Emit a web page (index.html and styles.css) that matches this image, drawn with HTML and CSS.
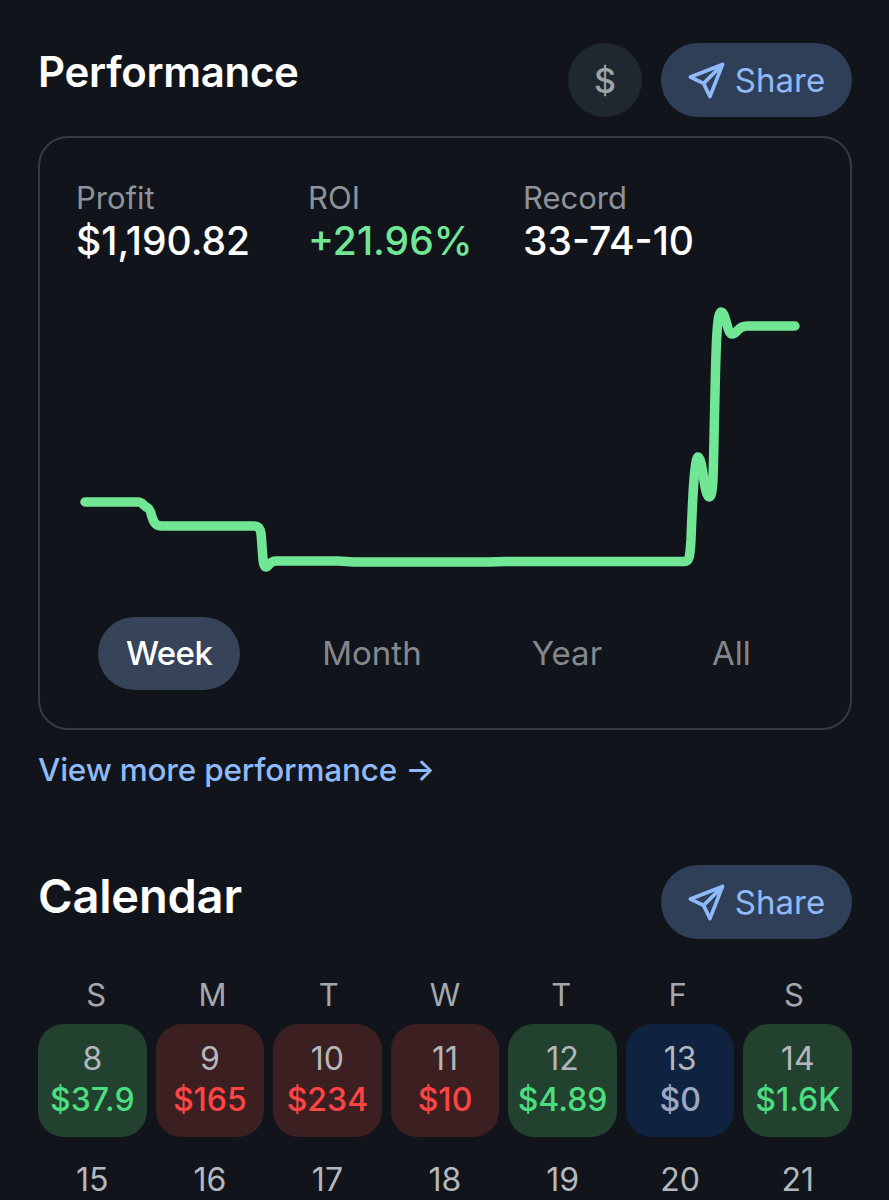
FILE: index.html
```html
<!DOCTYPE html>
<html lang="en">
<head>
    <meta charset="UTF-8">
    <meta name="viewport" content="width=device-width, initial-scale=1.0">
    <title>Performance</title>
    <link rel="stylesheet" href="styles.css">
</head>
<body>
    <div class="page">
        <div class="section-head">
            <h2>Performance</h2>
            <div class="head-actions">
                <button class="round-btn">$</button>
                <button class="share-btn">
                    <svg class="share-icon" viewBox="0 0 38 38"><path d="M2.5 15.5 L35.5 2.5 L22.5 35.5 L16 22 Z M16 22 L35.5 2.5"/></svg>
                    Share
                </button>
            </div>
        </div>

        <div class="perf-card">
            <div class="stats">
                <div>
                    <div class="stat-label">Profit</div>
                    <div class="stat-value">$1,190.82</div>
                </div>
                <div>
                    <div class="stat-label">ROI</div>
                    <div class="stat-value green">+21.96%</div>
                </div>
                <div>
                    <div class="stat-label">Record</div>
                    <div class="stat-value">33-74-10</div>
                </div>
            </div>
            <svg class="chart" viewBox="0 0 811 330">
                <path d="M45 218 H98 C103 218 103 222 108 224 C113 227 110 242 122 242 H214 C222 242 221 250 222 262 C223 275 223 283 226 283 C229 283 229 277 236 277 H298 L314 278 H448 L466 277.5 H644 C650 278 650 270 651 255 C652 230 654 173 658 173 C663 173 664 213 669 213 C674 213 673 190 675 110 C676 60 677 28 681 28 C686 28 687 50 692 50 C698 50 697 42 707 42 H755"/>
            </svg>
            <div class="tabs">
                <div class="tab active">Week</div>
                <div class="tab">Month</div>
                <div class="tab">Year</div>
                <div class="tab">All</div>
            </div>
        </div>

        <a class="more-link" href="#">View more performance →</a>

        <div class="section-head calendar-head">
            <h2>Calendar</h2>
            <div class="head-actions">
                <button class="share-btn">
                    <svg class="share-icon" viewBox="0 0 38 38"><path d="M2.5 15.5 L35.5 2.5 L22.5 35.5 L16 22 Z M16 22 L35.5 2.5"/></svg>
                    Share
                </button>
            </div>
        </div>

        <div class="weekdays">
            <div>S</div>
            <div>M</div>
            <div>T</div>
            <div>W</div>
            <div>T</div>
            <div>F</div>
            <div>S</div>
        </div>

        <div class="calendar">
            <div class="day win"><span>8</span><strong>$37.9</strong></div>
            <div class="day loss"><span>9</span><strong>$165</strong></div>
            <div class="day loss"><span>10</span><strong>$234</strong></div>
            <div class="day loss"><span>11</span><strong>$10</strong></div>
            <div class="day win"><span>12</span><strong>$4.89</strong></div>
            <div class="day even"><span>13</span><strong>$0</strong></div>
            <div class="day win"><span>14</span><strong>$1.6K</strong></div>

            <div class="day"><span>15</span></div>
            <div class="day"><span>16</span></div>
            <div class="day"><span>17</span></div>
            <div class="day"><span>18</span></div>
            <div class="day"><span>19</span></div>
            <div class="day"><span>20</span></div>
            <div class="day"><span>21</span></div>
        </div>
    </div>
</body>
</html>
```

FILE: styles.css
```css
html, body {
    margin: 0;
    height: 1200px;
    overflow: hidden;
    background-color: #11151b;
}
body {
    font-family: Inter, "Liberation Sans", sans-serif;
    color: #fff;
}
.page {
    padding: 43px 37px 0 38px;
}
.section-head {
    display: flex;
    justify-content: space-between;
    align-items: flex-start;
    height: 74px;
}
.section-head h2 {
    margin: 0;
    font-size: 42px;
    line-height: 58px;
    font-weight: 600;
    letter-spacing: -0.3px;
}
.calendar-head h2 {
    font-size: 47px;
    line-height: 62px;
    letter-spacing: -0.2px;
}
.head-actions {
    display: flex;
    gap: 19px;
}
button {
    font-family: inherit;
    border: none;
    height: 74px;
    border-radius: 37px;
    font-size: 33px;
}
.round-btn {
    width: 74px;
    background-color: #1f2731;
    color: #9ea3a8;
    font-size: 34px;
    font-weight: 500;
}
.share-btn {
    width: 191px;
    display: flex;
    align-items: center;
    justify-content: center;
    gap: 10px;
    background-color: #303f58;
    color: #8fbafa;
}
.share-icon {
    width: 37px;
    height: 37px;
    fill: none;
    stroke: #8fbafa;
    stroke-width: 3.8;
    stroke-linejoin: round;
    stroke-linecap: round;
}
.perf-card {
    margin-top: 19px;
    height: 590px;
    border: 2px solid #363b42;
    border-radius: 30px;
}
.stats {
    display: grid;
    grid-template-columns: 232px 215px auto;
    padding: 40px 0 0 36px;
}
.stat-label {
    font-size: 31px;
    line-height: 40px;
    color: #8e9399;
}
.stat-value {
    font-size: 39px;
    line-height: 46px;
    font-weight: 500;
}
.green {
    color: #71e695;
}
.chart {
    display: block;
    width: 811px;
    height: 330px;
    margin-top: 20px;
    fill: none;
    stroke: #71e695;
    stroke-width: 9.5;
    stroke-linecap: round;
    stroke-linejoin: round;
}
.tabs {
    display: flex;
    gap: 54px;
    padding-left: 58px;
    margin-top: 3px;
}
.tab {
    height: 73px;
    line-height: 73px;
    padding: 0 28px;
    border-radius: 37px;
    font-size: 33px;
    color: #84888e;
}
.tab.active {
    background-color: #364358;
    color: #fff;
    font-weight: 500;
    letter-spacing: -0.6px;
}
.more-link {
    display: block;
    margin-top: 18px;
    font-size: 31.5px;
    font-weight: 500;
    letter-spacing: -0.2px;
    line-height: 44px;
    color: #8fbafa;
    text-decoration: none;
}
.calendar-head {
    margin-top: 73px;
}
.weekdays {
    display: grid;
    grid-template-columns: repeat(7, 1fr);
    margin-top: 36px;
    text-align: center;
    font-size: 31px;
    line-height: 40px;
    color: #a4a8ad;
}
.calendar {
    display: grid;
    grid-template-columns: repeat(7, 1fr);
    column-gap: 9px;
    row-gap: 8px;
    margin-top: 9px;
}
.day {
    display: flex;
    flex-direction: column;
    align-items: center;
    height: 113px;
    padding-top: 16px;
    box-sizing: border-box;
    border-radius: 26px;
    font-size: 32px;
    color: #b4b8bd;
}
.day span {
    line-height: 38px;
}
.day strong {
    font-size: 32px;
    line-height: 44px;
    font-weight: 500;
}
.win {
    background-color: #23412f;
}
.win strong {
    color: #4ade80;
}
.loss {
    background-color: #3b1f21;
}
.loss strong {
    color: #ff4444;
}
.even {
    background-color: #0f2240;
}
.even strong {
    color: #9ca8c0;
}
```
